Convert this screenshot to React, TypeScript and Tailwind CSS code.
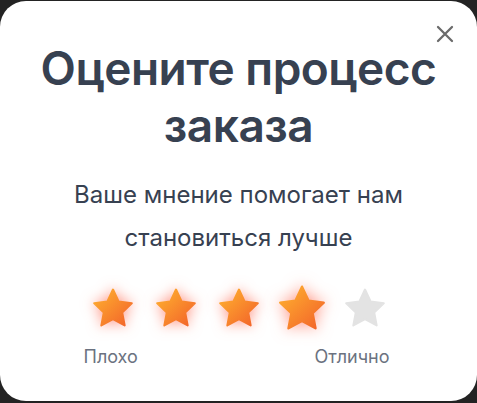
import React from "react";

function Star({ filled, big }: { filled: boolean; big?: boolean }) {
  return (
    <svg
      width={40}
      height={39}
      viewBox="2.3 2.0 19.4 18.6"
      className={
        (filled ? "drop-shadow-[0_0_7px_rgba(255,60,30,0.55)] " : "") +
        (big ? "scale-[1.16]" : "")
      }
    >
      <defs>
        <linearGradient id="sg" x1="0" y1="0" x2="1" y2="1">
          <stop offset="0%" stopColor="#ffb32f" />
          <stop offset="100%" stopColor="#f2612a" />
        </linearGradient>
      </defs>
      <path
        d="M12 2.6l2.75 5.85 6.35.8-4.65 4.42 1.2 6.33L12 16.9l-5.65 3.1 1.2-6.33L2.9 9.25l6.35-.8z"
        fill={filled ? "url(#sg)" : "#e3e3e3"}
        stroke={filled ? "url(#sg)" : "#e3e3e3"}
        strokeWidth="1"
        strokeLinejoin="round"
      />
    </svg>
  );
}

export default function App() {
  return (
    <div className="w-[477px] h-[403px] bg-[#232323] pt-[1px] font-['Inter',sans-serif]">
      <div className="relative h-[400px] bg-white rounded-[26px] flex flex-col items-center">
        <button className="absolute right-[22px] top-[23px] text-[#6b6b6b]">
          <svg width="20" height="20" viewBox="0 0 20 20" fill="none" stroke="currentColor" strokeWidth="2.3" strokeLinecap="round">
            <path d="M3 3l14 14M17 3L3 17" />
          </svg>
        </button>
        <h1 className="mt-[39px] text-[46px] leading-[57px] font-semibold text-[#374151] text-center tracking-[-0.5px]">
          Оцените процесс
          <br />
          заказа
        </h1>
        <p className="mt-[19px] text-[24px] leading-[43px] text-[#374151] text-center">
          Ваше мнение помогает нам
          <br />
          становиться лучше
        </p>
        <div className="mt-[29px] flex items-center gap-[23px]">
          <Star filled />
          <Star filled />
          <Star filled />
          <Star filled big />
          <Star filled={false} />
        </div>
        <div className="mt-[16px] mr-[4px] w-[306px] flex justify-between text-[18px] text-[#6b7280]">
          <span>Плохо</span>
          <span>Отлично</span>
        </div>
      </div>
    </div>
  );
}
